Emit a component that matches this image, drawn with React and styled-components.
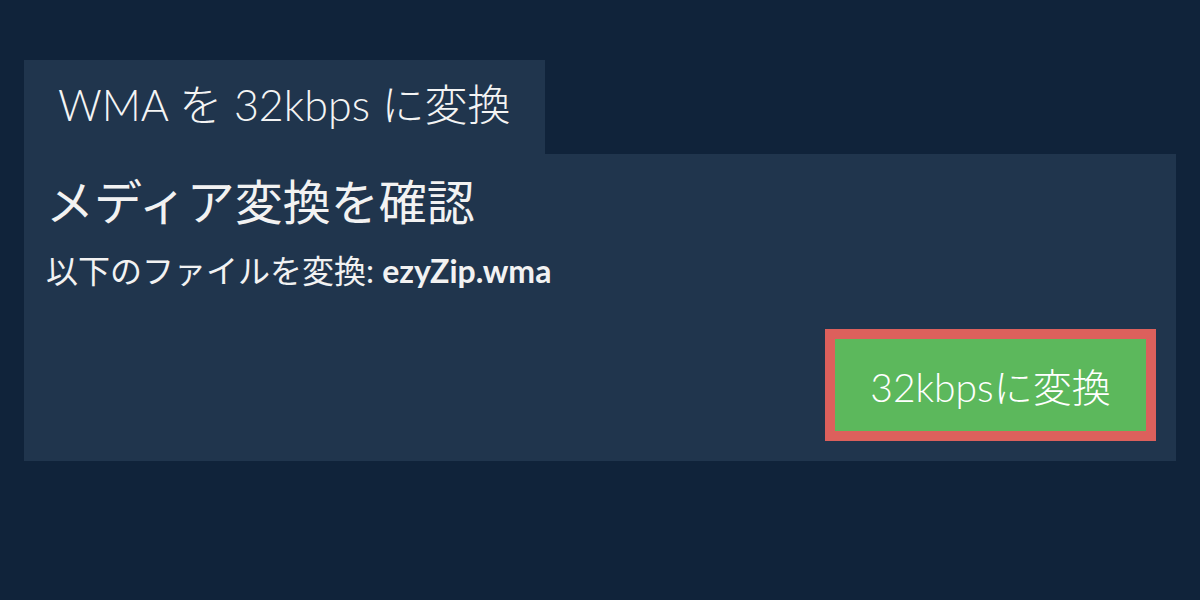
import React from 'react';
import styled, { createGlobalStyle } from 'styled-components';

const GlobalStyle = createGlobalStyle`
	html, body {
		margin: 0;
		padding: 0;
		background: #10233a;
	}
	body {
		font-family: Lato, "Noto Sans CJK JP", sans-serif;
		color: #f2f2f2;
	}
`;

const Page = styled.div`
	width: 1200px;
	height: 600px;
	box-sizing: border-box;
	padding: 60px 24px 0;
`;

const Tab = styled.div`
	display: inline-flex;
	align-items: center;
	height: 94px;
	box-sizing: border-box;
	padding: 0 34px 10px;
	background: #20354d;
	font-size: 43px;
	font-weight: 300;
	color: #f4f4f4;
	white-space: nowrap;
`;

const Panel = styled.div`
	background: #20354d;
	height: 307px;
	box-sizing: border-box;
	padding: 20px 20px 20px 22px;
	display: flex;
	flex-direction: column;
`;

const Title = styled.h2`
	margin: 0;
	font-size: 48px;
	font-weight: 400;
	line-height: 56px;
`;

const Subtitle = styled.p`
	margin: 21px 0 0;
	font-size: 32px;
	line-height: 40px;
`;

const FileName = styled.strong`
	font-weight: 700;
`;

const Actions = styled.div`
	margin-top: auto;
	display: flex;
	justify-content: flex-end;
`;

const ConvertButton = styled.button`
	width: 331px;
	height: 112px;
	box-sizing: border-box;
	border: 10px solid #dc605c;
	background: #5cb85c;
	color: #ffffff;
	font-family: Lato, "Noto Sans CJK JP", sans-serif;
	font-size: 39px;
	font-weight: 300;
	cursor: pointer;
	padding: 0;
`;

const App = () => {
	return (
		<>
			<GlobalStyle />
			<Page>
				<Tab>WMA を 32kbps に変換</Tab>
				<Panel>
					<Title>メディア変換を確認</Title>
					<Subtitle>
						以下のファイルを変換: <FileName>ezyZip.wma</FileName>
					</Subtitle>
					<Actions>
						<ConvertButton>32kbpsに変換</ConvertButton>
					</Actions>
				</Panel>
			</Page>
		</>
	);
};

export default App;
